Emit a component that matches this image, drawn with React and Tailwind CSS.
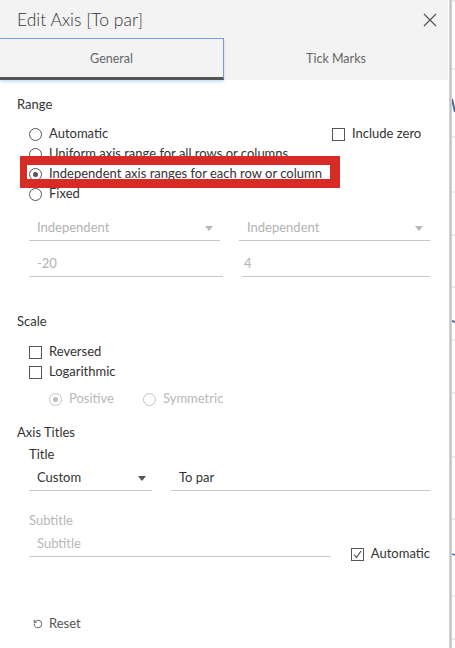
import React from "react";
import { RotateCcw } from "lucide-react";

const font = { fontFamily: "Lato, 'Noto Sans', sans-serif" };

function Radio({ checked, disabled }) {
  return (
    <span
      className={`flex h-[13px] w-[13px] shrink-0 items-center justify-center rounded-full border bg-white ${
        disabled ? "border-[#c4c4c4]" : "border-[#555]"
      }`}
    >
      {checked && (
        <span className={`h-[5px] w-[5px] rounded-full ${disabled ? "bg-[#bdbdbd]" : "bg-[#555]"}`} />
      )}
    </span>
  );
}

function Check({ checked }) {
  return (
    <span className="flex h-[13px] w-[13px] shrink-0 items-center justify-center border border-[#555] bg-white">
      {checked && (
        <svg width="11" height="11" viewBox="0 0 11 11">
          <path d="M2 5.5 L4.5 8.5 L9 2" fill="none" stroke="#444" strokeWidth="1.1" />
        </svg>
      )}
    </span>
  );
}

function Arrow({ color }) {
  return (
    <svg width="8" height="5" viewBox="0 0 8 5">
      <path d="M0 0 L8 0 L4 5 Z" fill={color} />
    </svg>
  );
}

export default function App() {
  return (
    <div className="flex h-[648px] w-[455px] overflow-hidden bg-white text-[13px] text-[#333]" style={font}>
      <div className="flex w-[448px] shrink-0 flex-col">
        {/* header */}
        <div className="flex h-[80px] flex-col bg-[#f3f3f3]">
          <div className="flex h-[38px] items-center justify-between pl-[17px] pr-[11px] pt-[2px]">
            <span className="text-[17.5px] font-light text-[#333]">Edit Axis [To par]</span>
            <svg width="14" height="14" viewBox="0 0 14 14">
              <path d="M1 1 L13 13 M13 1 L1 13" stroke="#555" strokeWidth="1.2" fill="none" />
            </svg>
          </div>
          <div className="flex h-[42px]">
            <div className="flex w-[224px] items-center justify-center border-t border-r border-[#6f9fe0] border-b-[3px] border-b-[#555] bg-[#f3f3f3] pt-[2px] text-[12.5px] text-[#666] shadow-[0_2px_3px_rgba(110,160,230,0.35)]">
              General
            </div>
            <div className="flex flex-1 items-center justify-center pt-[1px] text-[12.5px] text-[#666]">
              Tick Marks
            </div>
          </div>
        </div>

        {/* body */}
        <div className="relative flex flex-col pl-[17px]">
          <div className="mt-[15px] flex h-[20px] items-center">Range</div>

          <div className="mt-[9px] flex flex-col pl-[12px] pr-[18px]">
            <div className="flex h-[20px] items-center">
              <div className="flex flex-1 items-center gap-[7px]">
                <Radio />
                <span>Automatic</span>
              </div>
              <div className="flex w-[98px] items-center gap-[7px]">
                <Check />
                <span>Include zero</span>
              </div>
            </div>
            <div className="flex h-[20px] items-center gap-[7px]">
              <Radio />
              <span>Uniform axis range for all rows or columns</span>
            </div>
            <div className="flex h-[20px] items-center gap-[7px]">
              <Radio checked />
              <span>Independent axis ranges for each row or column</span>
            </div>
            <div className="flex h-[20px] items-center gap-[7px]">
              <Radio />
              <span>Fixed</span>
            </div>

            <div className="mt-[12px] flex gap-[19px]">
              <div className="flex h-[25px] flex-1 items-center justify-between border-b border-[#c8c8c8] pl-[8px] pr-[7px] text-[#b3b3b3]">
                <span>Independent</span>
                <Arrow color="#b8b8b8" />
              </div>
              <div className="flex h-[25px] flex-1 items-center justify-between border-b border-[#c8c8c8] pl-[8px] pr-[7px] text-[#b3b3b3]">
                <span>Independent</span>
                <Arrow color="#b8b8b8" />
              </div>
            </div>
            <div className="mt-[11px] flex gap-[19px]">
              <div className="flex h-[25px] flex-1 items-center border-b border-[#c8c8c8] pl-[8px] text-[#b3b3b3]">-20</div>
              <div className="flex h-[25px] flex-1 items-center border-b border-[#c8c8c8] pl-[2px] text-[#b3b3b3]">4</div>
            </div>
          </div>

          <div className="mt-[35px] flex h-[20px] items-center">Scale</div>
          <div className="mt-[10px] flex flex-col pl-[12px]">
            <div className="flex h-[20px] items-center gap-[7px]">
              <Check />
              <span>Reversed</span>
            </div>
            <div className="flex h-[20px] items-center gap-[7px]">
              <Check />
              <span>Logarithmic</span>
            </div>
            <div className="mt-[7px] flex h-[20px] items-center pl-[20px] text-[#b8b8b8]">
              <div className="flex w-[94px] items-center gap-[7px]">
                <Radio checked disabled />
                <span>Positive</span>
              </div>
              <div className="flex items-center gap-[7px]">
                <Radio disabled />
                <span>Symmetric</span>
              </div>
            </div>
          </div>

          <div className="mt-[14px] flex h-[20px] items-center">Axis Titles</div>
          <div className="flex flex-col pl-[12px] pr-[18px]">
            <div className="mt-[2px] flex h-[20px] items-center">Title</div>
            <div className="mt-[1px] flex gap-[19px]">
              <div className="flex h-[25px] w-[123px] items-center justify-between border-b border-[#c8c8c8] pl-[8px] pr-[6px]">
                <span>Custom</span>
                <Arrow color="#555" />
              </div>
              <div className="flex h-[25px] flex-1 items-center border-b border-[#c8c8c8] pl-[8px]">To par</div>
            </div>
            <div className="mt-[20px] flex h-[20px] items-center text-[#b8b8b8]">Subtitle</div>
            <div className="mt-[1px] flex items-start gap-[20px]">
              <div className="flex h-[25px] w-[303px] items-center border-b border-[#c8c8c8] pl-[8px] text-[#b8b8b8]">
                Subtitle
              </div>
              <div className="mt-[12px] flex h-[20px] items-center gap-[7px]">
                <Check checked />
                <span>Automatic</span>
              </div>
            </div>
          </div>

          <div className="mt-[50px] flex h-[20px] items-center gap-[6px] pl-[16px] text-[#555]">
            <RotateCcw size={10} strokeWidth={2.2} color="#555" />
            <span className="text-[#555]">Reset</span>
          </div>

          {/* red annotation box */}
          <div className="pointer-events-none absolute left-[20px] top-[75.5px] h-[32px] w-[320px] border-[#d72b26] border-t-[9px] border-b-[9px] border-l-[7px] border-r-[10px]" />
        </div>
      </div>

      {/* dialog edge and background chart */}
      <div className="w-[1px] shrink-0 bg-white" />
      <div className="flex w-[3px] shrink-0">
        <div className="w-[1px] bg-[#d4d4d4]" />
        <div className="w-[1px] bg-[#c2c2c2]" />
        <div className="w-[1px] bg-[#d0d0d0]" />
      </div>
      <svg width="3" height="648" className="shrink-0">
        {[1, 69, 137, 192, 235, 287, 340, 393, 457, 519, 596, 639].map((y) => (
          <line key={y} x1="0" x2="3" y1={y} y2={y} stroke="#d8d8d8" strokeWidth="1" />
        ))}
        <path d="M0 99 L3 112" stroke="#4a6aa0" strokeWidth="2" />
        <line x1="0" x2="3" y1="321" y2="322" stroke="#4a6aa0" strokeWidth="2" />
        <line x1="0" x2="3" y1="554" y2="555" stroke="#4a6aa0" strokeWidth="1.5" />
      </svg>
    </div>
  );
}
